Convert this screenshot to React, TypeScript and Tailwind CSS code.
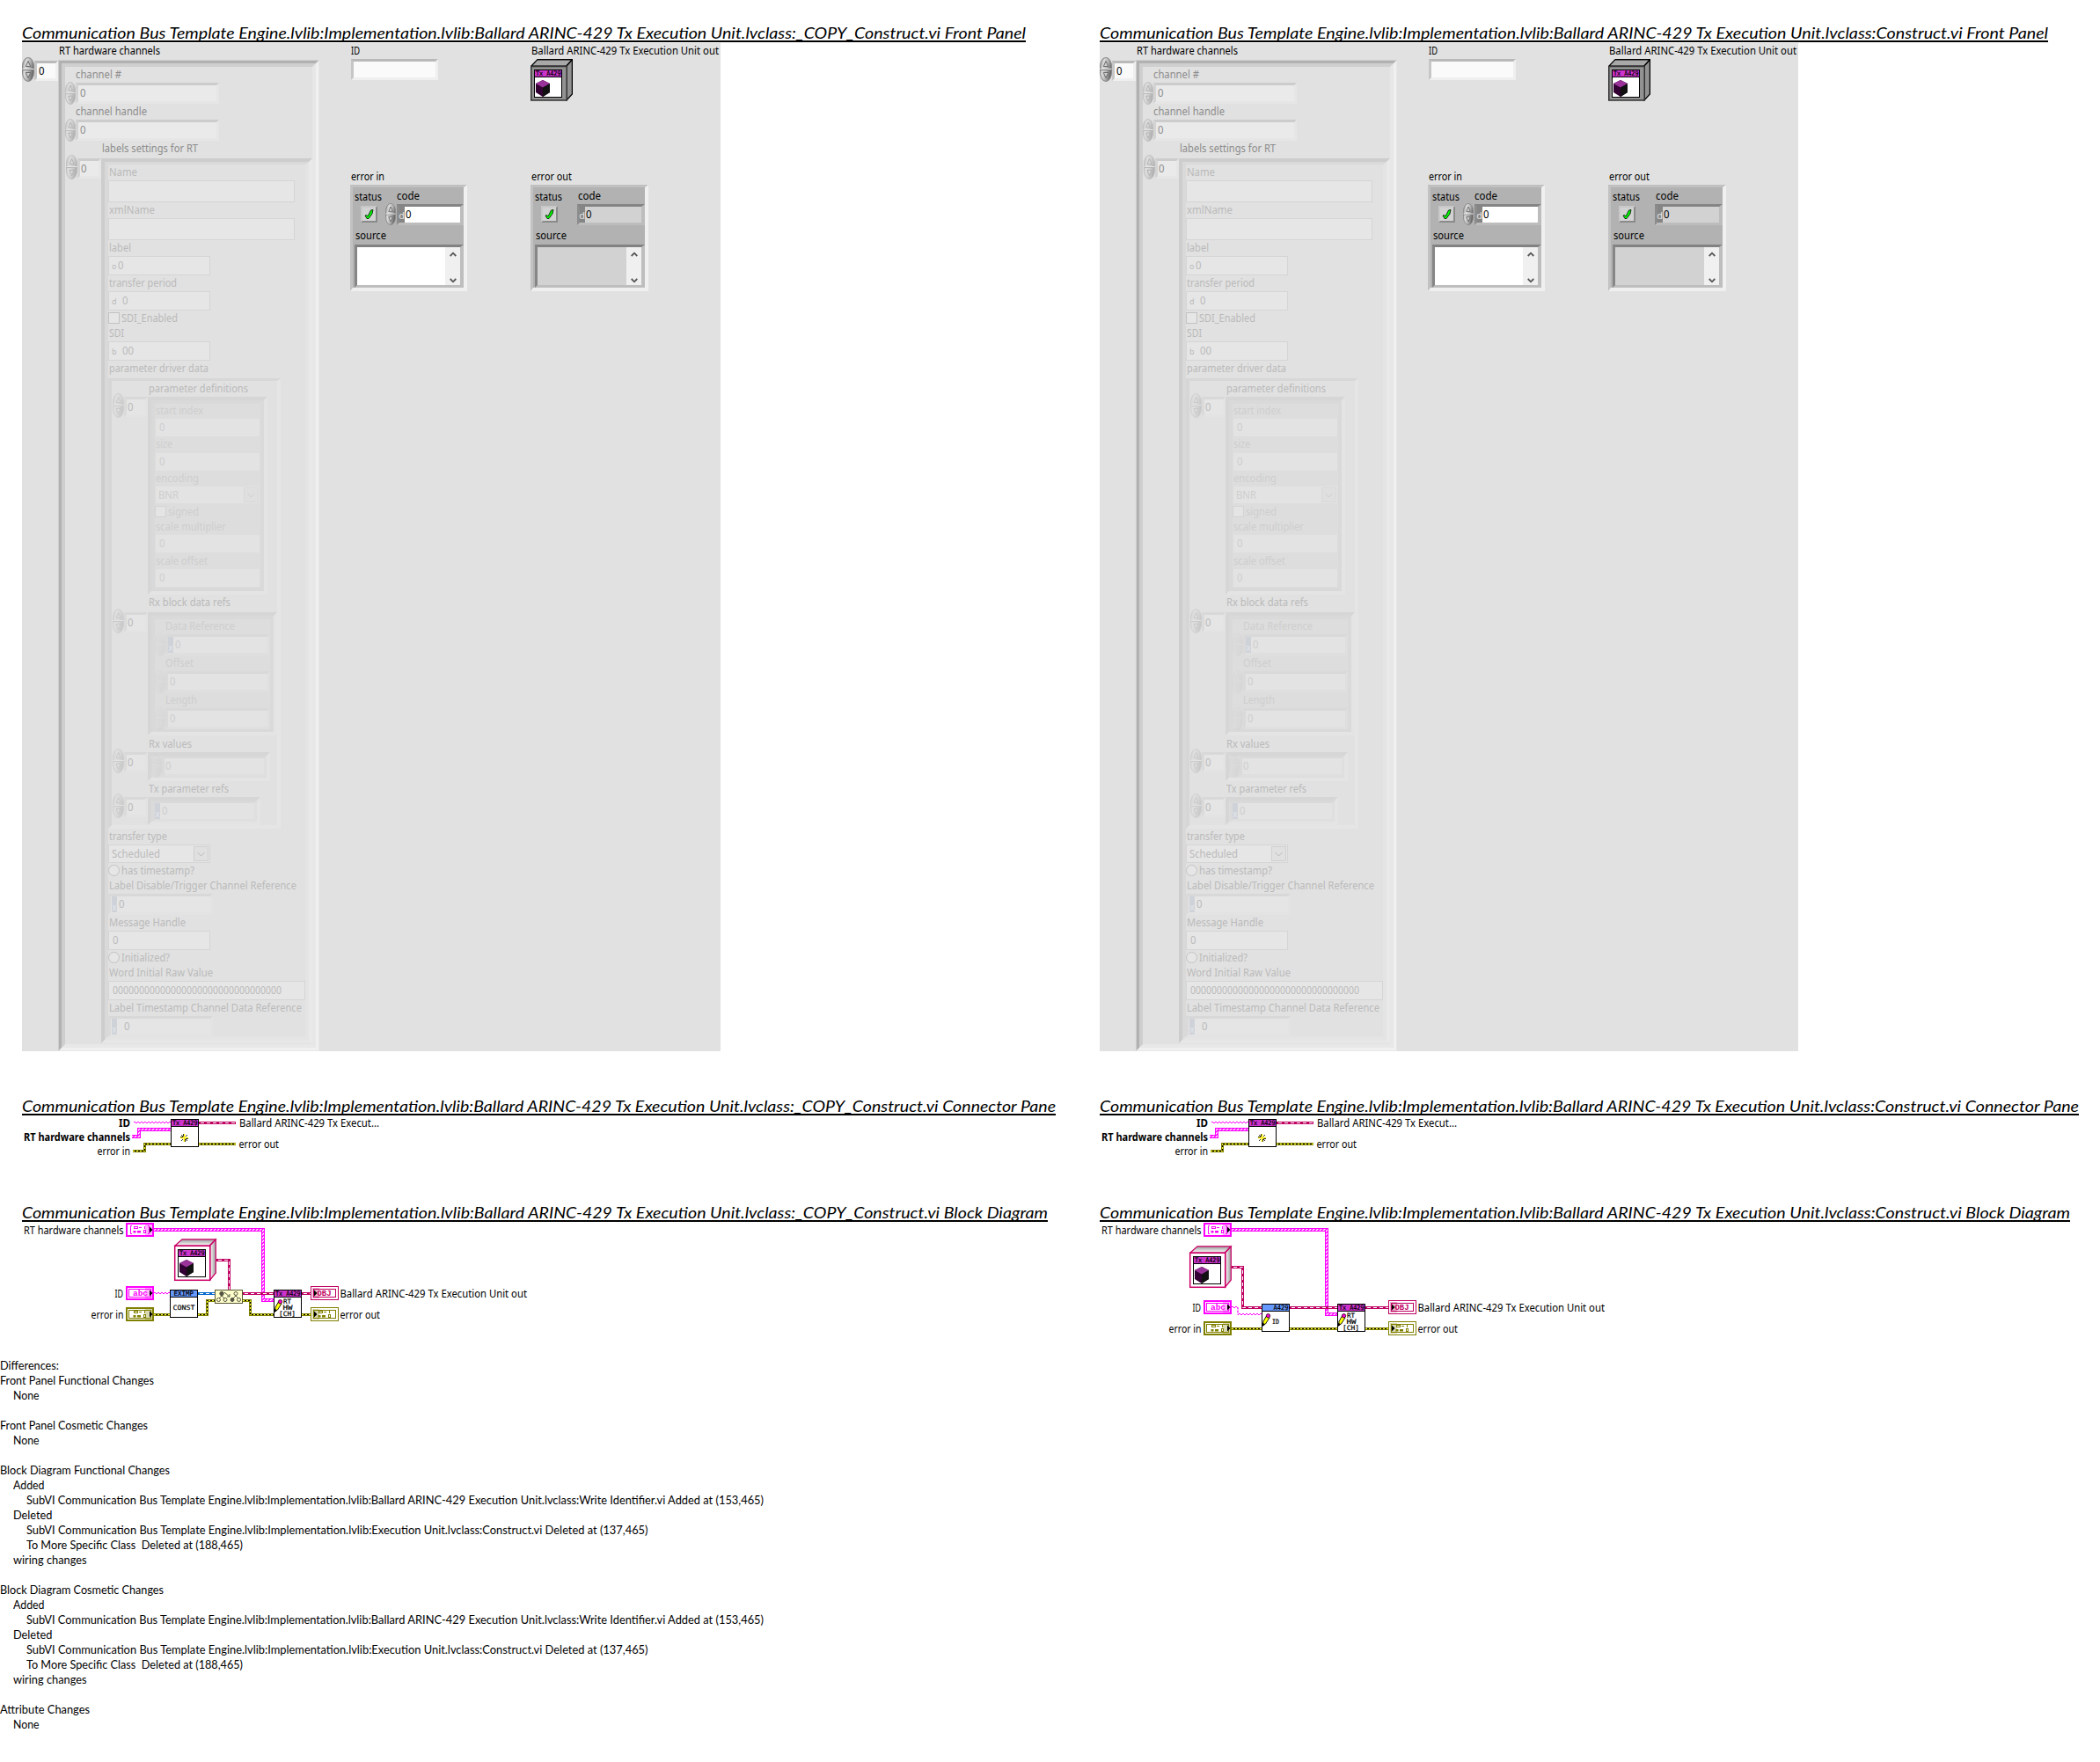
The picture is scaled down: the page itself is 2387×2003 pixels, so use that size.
import React, { useLayoutEffect, useRef, useState } from "react";

type Kids = { children?: React.ReactNode };
type Level = 0 | 1 | 2 | 3;

/* Single line of text stretched to an exact advance width. */
function Fit({ w, children, className = "" }: { w: number; children: string; className?: string }) {
  const ref = useRef<HTMLSpanElement>(null);
  const [scale, setScale] = useState(1);
  useLayoutEffect(() => {
    if (ref.current) setScale(w / ref.current.getBoundingClientRect().width);
  }, []);
  return (
    <span className={"block shrink-0 whitespace-pre " + className} style={{ width: w }}>
      <span ref={ref} className="inline-block origin-left" style={{ transform: `scaleX(${scale})` }}>
        {children}
      </span>
    </span>
  );
}

const TEXT: Record<Level, string> = {
  0: "text-black",
  1: "text-[#8c8c8c]",
  2: "text-[#bababa]",
  3: "text-[#cecece]",
};

const SUNK: Record<Level, string> = {
  0: "border-t-[#b9b9b9] border-l-[#c6c6c6] border-r-[#efefef] border-b-[#efefef] bg-[#fafafa]",
  1: "border-t-[#cccccc] border-l-[#d3d3d3] border-r-[#e6e6e6] border-b-[#e6e6e6] bg-[#eaeaea]",
  2: "border-t-[#d8d8d8] border-l-[#dadada] border-r-[#e3e3e3] border-b-[#e3e3e3] bg-[#e5e5e5]",
  3: "border-t-[#d9d9d9] border-l-[#dadada] border-r-[#dfdfdf] border-b-[#dfdfdf] bg-[#e3e3e3]",
};

const FADE: Record<Level, string> = { 0: "opacity-100", 1: "opacity-40", 2: "opacity-20", 3: "opacity-5" };

function Label({ w, level = 0, className = "", children }: { w: number; level?: Level; className?: string; children: string }) {
  return (
    <div className={"h-[18px] leading-[18px] " + TEXT[level] + " " + className}>
      <Fit w={w}>{children}</Fit>
    </div>
  );
}

function Spinner({ level, className = "h-7 w-[13px]" }: { level: Level; className?: string }) {
  return (
    <svg viewBox="0 0 13 28" preserveAspectRatio="none" className={"block shrink-0 " + FADE[level] + " " + className}>
      <defs>
        <linearGradient id="knob" x1="0" x2="1" y1="0" y2="0.35">
          <stop offset="0" stopColor="#8c8c8c" />
          <stop offset="0.35" stopColor="#dcdcdc" />
          <stop offset="0.7" stopColor="#b0b0b0" />
          <stop offset="1" stopColor="#6a6a6a" />
        </linearGradient>
      </defs>
      <rect x="0.5" y="0.5" width="12" height="27" rx="6" ry="10" fill="url(#knob)" stroke="#8a8a8a" />
      <path d="M0.5 14.5H12.5" stroke="#777" />
      <path d="M0.5 13.5H12.5" stroke="#eee" />
      <path d="M4 10.5L6.5 4.5L9 10.5Z" fill="#d0d0d0" stroke="#666" strokeWidth="0.9" />
      <path d="M4 17.5L6.5 23.5L9 17.5Z" fill="#d0d0d0" stroke="#666" strokeWidth="0.9" />
    </svg>
  );
}

/* Bevelled numeric field. */
function Num({ level, className, children }: Kids & { level: Level; className: string }) {
  return (
    <div className={"flex shrink-0 items-center border-3 leading-none " + SUNK[level] + " " + TEXT[level] + " " + className}>{children}</div>
  );
}

/* Flat system-style field. */
function Field({ className, children }: Kids & { className: string }) {
  return (
    <div className={"flex items-center border border-[#d5d5d5] bg-[#e6e6e6] leading-none text-[#bababa] " + className}>{children}</div>
  );
}

function Flat({ className = "h-5", children }: Kids & { className?: string }) {
  return <div className={"ml-px flex w-[118px] items-center bg-[#e3e3e3] leading-none text-[#cecece] " + className}>{children}</div>;
}

function Tag({ className = "", children }: { className?: string; children: string }) {
  return (
    <span className={"flex w-[6px] shrink-0 items-end justify-center self-stretch bg-[#cfd3d9] pb-px text-[10px] text-[#e4e6ea] " + className}>
      {children}
    </span>
  );
}

function Chevron({ className }: { className: string }) {
  return (
    <span className={"ml-auto flex h-[17px] w-[17px] shrink-0 items-center justify-center border " + className}>
      <svg viewBox="0 0 9 6" className="h-[6px] w-[9px]">
        <path d="M0.5 1L4.5 5L8.5 1" fill="none" stroke="currentColor" />
      </svg>
    </span>
  );
}

function IndexRow({ level, className = "", children }: Kids & { level: Level; className?: string }) {
  return (
    <div className={"flex items-start " + className}>
      <Spinner level={level} className={level === 0 ? "-mt-[3px] h-7 w-[14px]" : "-mt-1 ml-px h-7 w-[13px]"} />
      <Num level={level} className={level === 0 ? "mt-px h-[23px] w-[27px] pl-0.5" : "h-[23px] w-[27px] pl-px"}>
        <Fit w={6.5}>0</Fit>
      </Num>
      {children}
    </div>
  );
}

/* Two-step bevel that surrounds an array element. */
function Frame({ outer, inner, className, children }: Kids & { outer: string; inner: string; className: string }) {
  return (
    <div className={"flex shrink-0 border-4 " + outer + " " + className}>
      <div className={"min-w-0 flex-1 " + inner}>{children}</div>
    </div>
  );
}

const FAINT_OUTER = "border-t-[#d6d6d6] border-l-[#d6d6d6] border-r-[#e4e4e4] border-b-[#e4e4e4] bg-[#dcdcdc]";
const FAINT_INNER = "border-4 border-t-[#d9d9d9] border-l-[#d9d9d9] border-r-[#dadada] border-b-[#d9d9d9] bg-[#dddddd]";

function Stepper({ level, className = "", children }: Kids & { level: Level; className?: string }) {
  return (
    <div className={"flex h-6 items-center " + className}>
      <Spinner level={level} className="h-[26px] w-3" />
      {children}
    </div>
  );
}

function ParameterDefinitions() {
  return (
    <Frame outer={FAINT_OUTER} inner={FAINT_INNER} className="h-[225px] w-[136px]">
      <Label level={3} w={54} className="-mt-px pl-px">start index</Label>
      <Flat><Fit w={6.5} className="ml-1">0</Fit></Flat>
      <Label level={3} w={19} className="pl-px">size</Label>
      <Flat className="mt-px h-5"><Fit w={6.5} className="ml-1">0</Fit></Flat>
      <Label level={3} w={49} className="pl-px">encoding</Label>
      <Flat className="h-[19px]">
        <Fit w={23} className="ml-[3px]">BNR</Fit>
        <Chevron className="mr-px border-[#d9d9d9] bg-[#dfdfdf]" />
      </Flat>
      <div className="mt-[3px] flex h-[13px] items-center leading-none text-[#cecece]">
        <span className="mr-0.5 h-[13px] w-[13px] border border-[#d3d3d3] bg-[#e4e4e4]" />
        <Fit w={35}>signed</Fit>
      </div>
      <Label level={3} w={80} className="mt-0.5 pl-px">scale multiplier</Label>
      <Flat><Fit w={6.5} className="ml-1">0</Fit></Flat>
      <Label level={3} w={59} className="mt-px pl-px">scale offset</Label>
      <Flat><Fit w={6.5} className="ml-1">0</Fit></Flat>
    </Frame>
  );
}

function BlockDataRefs() {
  return (
    <Frame outer={FAINT_OUTER} inner={FAINT_INNER} className="h-[140px] w-[147px]">
      <Label level={3} w={79} className="-mt-px pl-3">Data Reference</Label>
      <Stepper level={3}>
        <Num level={3} className="h-6 w-[119px]"><Tag>x</Tag><Fit w={6.5} className="ml-0.5">0</Fit></Num>
      </Stepper>
      <Label level={3} w={32} className="pl-3">Offset</Label>
      <Stepper level={3}>
        <Num level={3} className="h-6 w-[119px] pl-0.5"><Fit w={6.5}>0</Fit></Num>
      </Stepper>
      <Label level={3} w={36} className="pl-3">Length</Label>
      <Stepper level={3}>
        <Num level={3} className="h-6 w-[119px] pl-0.5"><Fit w={6.5}>0</Fit></Num>
      </Stepper>
    </Frame>
  );
}

function DriverData() {
  return (
    <div className="mt-0.5 h-[512px] w-[196px] border-4 border-t-3 border-t-[#d7d7d7] border-r-[#e5e5e5] border-b-[#e5e5e5] border-l-[#d6d6d6]">
      <Label level={2} w={113} className="pl-[42px]">parameter definitions</Label>
      <IndexRow level={2}><ParameterDefinitions /></IndexRow>
      <Label level={2} w={93} className="pl-[42px]">Rx block data refs</Label>
      <IndexRow level={2} className="mt-0.5"><BlockDataRefs /></IndexRow>
      <Label level={2} w={49} className="mt-px pl-[42px]">Rx values</Label>
      <IndexRow level={2}>
        <Frame outer={FAINT_OUTER} inner="bg-[#dcdcdc]" className="h-[33px] w-[139px]">
          <Stepper level={3}>
            <Num level={3} className="h-6 w-[119px] pl-px"><Fit w={6.5}>0</Fit></Num>
          </Stepper>
        </Frame>
      </IndexRow>
      <Label level={2} w={91} className="pl-[42px]">Tx parameter refs</Label>
      <IndexRow level={2}>
        <Frame outer={FAINT_OUTER} inner="bg-[#dcdcdc]" className="h-8 w-32">
          <Num level={3} className="ml-px h-6 w-[119px]"><Tag>x</Tag><Fit w={6.5} className="ml-0.5">0</Fit></Num>
        </Frame>
      </IndexRow>
    </div>
  );
}

function Toggle({ w, round, children }: { w: number; round?: boolean; children: string }) {
  return (
    <div className="mt-0.5 flex h-[13px] items-center leading-none text-[#bababa]">
      <span className={"mr-0.5 h-[13px] w-[13px] border border-[#c2c2c2] bg-[#e6e6e6] " + (round ? "rounded-full" : "")} />
      <Fit w={w}>{children}</Fit>
    </div>
  );
}

function LabelSettings() {
  return (
    <div className="flex h-[1006px] w-[240px] shrink-0 border-4 border-t-[#cdcdcd] border-r-[#e9e9e9] border-b-[#e7e7e7] border-l-[#cdcdcd]">
      <div className="min-w-0 flex-1 border-4 border-t-3 border-t-[#dadada] border-r-[#e4e4e4] border-b-[#e4e4e4] border-l-[#d9d9d9]">
        <Label level={2} w={32} className="pl-px">Name</Label>
        <Field className="h-[25px] w-[212px]" />
        <Label level={2} w={52} className="pl-px">xmlName</Label>
        <Field className="h-[25px] w-[212px]" />
        <Label level={2} w={25} className="pl-px">label</Label>
        <Field className="h-[22px] w-[116px] gap-0.5 pl-[3px]">
          <span className="w-[5px] text-[9px]">o</span><Fit w={6.5}>0</Fit>
        </Field>
        <Label level={2} w={77} className="pl-px">transfer period</Label>
        <Field className="h-[22px] w-[116px] gap-[7px] pl-[3px]">
          <span className="w-[5px] text-[9px]">d</span><Fit w={6.5}>0</Fit>
        </Field>
        <Toggle w={64}>SDI_Enabled</Toggle>
        <Label level={2} w={17} className="mt-0.5 pl-px">SDI</Label>
        <Field className="h-[22px] w-[116px] gap-[7px] pl-[3px]">
          <span className="w-[5px] text-[9px]">b</span><Fit w={13}>00</Fit>
        </Field>
        <Label level={2} w={113} className="pl-px">parameter driver data</Label>
        <DriverData />
        <Label level={2} w={66} className="pl-px">transfer type</Label>
        <Field className="h-[21px] w-[116px] pl-[3px]">
          <Fit w={55}>Scheduled</Fit>
          <Chevron className="mr-px border-[#d0d0d0] bg-[#e0e0e0]" />
        </Field>
        <Toggle w={83} round>has timestamp?</Toggle>
        <Label level={2} w={213} className="mt-0.5 pl-px">Label Disable/Trigger Channel Reference</Label>
        <Num level={2} className="h-6 w-[119px]"><Tag className="ml-px">x</Tag><Fit w={6.5} className="ml-0.5">0</Fit></Num>
        <Label level={2} w={87} className="pl-px">Message Handle</Label>
        <Field className="h-[22px] w-[116px] pl-1"><Fit w={6.5}>0</Fit></Field>
        <Toggle w={55} round>Initialized?</Toggle>
        <Label level={2} w={118} className="mt-0.5 pl-px">Word Initial Raw Value</Label>
        <Field className="h-[22px] w-[224px] pl-1"><Fit w={192}>00000000000000000000000000000000</Fit></Field>
        <Label level={2} w={219} className="pl-px">Label Timestamp Channel Data Reference</Label>
        <Num level={2} className="h-6 w-[119px]"><Tag className="ml-px">x</Tag><Fit w={6.5} className="ml-2">0</Fit></Num>
      </div>
    </div>
  );
}

function HardwareChannels() {
  return (
    <div className="w-[338px] shrink-0">
      <Label w={115} className="pl-[42px]">RT hardware channels</Label>
      <IndexRow level={0} className="mt-px">
        <div className="flex h-[1127px] w-[297px] shrink-0 border border-t-[#cecece] border-r-[#e7e7e7] border-b-[#e7e7e7] border-l-[#cecece]">
          <div className="flex flex-1 border-3 border-t-[#b1b1b1] border-r-[#f0f0f0] border-b-[#f0f0f0] border-l-[#b1b1b1]">
            <div className="min-w-0 flex-1 border-4 border-t-[#cfcfcf] border-r-[#e7e7e7] border-b-[#e8e8e8] border-l-[#cecece]">
              <Label level={1} w={52} className="pl-3">channel #</Label>
              <Stepper level={1}><Num level={1} className="h-6 w-[163px] pl-0.5"><Fit w={6.5}>0</Fit></Num></Stepper>
              <Label level={1} w={81} className="pl-3">channel handle</Label>
              <Stepper level={1}><Num level={1} className="h-6 w-[163px] pl-0.5"><Fit w={6.5}>0</Fit></Num></Stepper>
              <Label level={1} w={109} className="pl-[42px]">labels settings for RT</Label>
              <IndexRow level={1} className="mt-0.5"><LabelSettings /></IndexRow>
            </div>
          </div>
        </div>
      </IndexRow>
    </div>
  );
}

function ErrorCluster({ input }: { input?: boolean }) {
  const fill = input ? "bg-white" : "bg-[#d2d2d2]";
  return (
    <div className={"h-[121px] border-4 border-t-3 border-l-3 border-t-[#c0c0c0] border-r-[#f0f0f0] border-b-[#efefef] border-l-[#c2c2c2] bg-[#b2b2b2] " + (input ? "w-[133px]" : "w-[134px]")}>
      <div className="flex h-[17px] pt-0.5 leading-[18px]">
        <Fit w={31} className="ml-[2px]">status</Fit>
        <Fit w={26} className={input ? "-mt-px ml-[17px]" : "-mt-px ml-[18px]"}>code</Fit>
      </div>
      <div className="flex h-[26px] items-center">
        <span className="mt-px ml-[9px] flex h-[19px] w-[19px] shrink-0 items-center justify-center border-2 border-t-[#c8c8c8] border-r-[#8b8b8b] border-b-[#8b8b8b] border-l-[#c8c8c8] bg-[#d2d2d2]">
          <svg viewBox="0 0 11 13" className="h-[13px] w-[11px] shrink-0">
            <path d="M1 8L2.5 7.5L4 9L7.5 2L10 1.5L9 6L5 11.5L3 11.5Z" fill="#00ff00" stroke="#000" strokeWidth="0.8" strokeLinejoin="round" />
          </svg>
        </span>
        {input ? <Spinner level={0} className="ml-[9px] h-[25px] w-3" /> : <span className="w-[21px] shrink-0" />}
        <div className={"mt-0.5 ml-px flex h-6 flex-1 items-center border-3 border-r-4 border-t-[#858585] border-r-[#bdbdbd] border-b-[#bdbdbd] border-l-[#8c8c8c] leading-none " + fill}>
          <span className="flex w-[6px] items-center justify-end self-stretch bg-[#858585] text-[11px] text-[#e4e4e4]">d</span>
          <Fit w={6.5} className="ml-px">0</Fit>
        </div>
      </div>
      <div className="h-[18px] pt-px leading-[22px]"><Fit w={35} className="ml-[3px]">source</Fit></div>
      <div className={"mt-1 ml-[2px] flex h-[49px] justify-end border-3 border-r-4 border-t-[#828282] border-r-[#bebebe] border-b-[#bebebe] border-l-[#868686] " + fill}>
        <div className="flex w-[17px] flex-col items-center justify-between bg-[#f0f0f0] py-[5px]">
          <svg viewBox="0 0 8 6" className="h-[6px] w-2"><path d="M0.7 5L4 1.7L7.3 5" fill="none" stroke="#555" strokeWidth="1.8" /></svg>
          <svg viewBox="0 0 8 6" className="-mb-[3px] h-[6px] w-2"><path d="M0.7 1L4 4.3L7.3 1" fill="none" stroke="#555" strokeWidth="1.8" /></svg>
        </div>
      </div>
    </div>
  );
}

function FrontPanel() {
  return (
    <div className="mt-px flex h-[1146px] w-[794px] bg-[#e1e1e1] text-[12px]">
      <HardwareChannels />
      <div className="ml-[35px] w-[133px]">
        <Label w={10} className="pl-px">ID</Label>
        <Num level={0} className="ml-px h-6 w-[99px]" />
        <Label w={38} className="mt-[101px] pl-px">error in</Label>
        <ErrorCluster input />
      </div>
      <div className="ml-[72px] w-[215px]">
        <Label w={213} className="pl-px">Ballard ARINC-429 Tx Execution Unit out</Label>
        <svg viewBox="0 0 48 48" className="block h-12 w-12">
          <defs>
            <linearGradient id="lid" x1="0" x2="0" y1="0" y2="0.2"><stop offset="0" stopColor="#3c3c3c" /><stop offset="1" stopColor="#a8a8a8" /></linearGradient>
            <linearGradient id="flank" x1="0.85" x2="1" y1="0" y2="0"><stop offset="0" stopColor="#929292" /><stop offset="1" stopColor="#3c3c3c" /></linearGradient>
          </defs>
          <path d="M1 8L8 0.7H47.3L41 8Z" fill="url(#lid)" stroke="#000" strokeWidth="1.2" />
          <path d="M41 8L47.4 1V40L41 47Z" fill="url(#flank)" stroke="#000" strokeWidth="1.2" />
          <rect x="0.75" y="8.5" width="40.5" height="38.5" fill="#929292" stroke="#333" strokeWidth="1.5" />
          <g transform="translate(4 12)"><ClassFace /></g>
        </svg>
        <Label w={46} className="mt-[77px] pl-px">error out</Label>
        <ErrorCluster />
      </div>
    </div>
  );
}

/* ---------- diagram drawing ---------- */

function T({ x, y, w, children, bold }: { x: number; y: number; w: number; children: string; bold?: boolean }) {
  return (
    <text x={x} y={y} textLength={w} lengthAdjust="spacingAndGlyphs" className={"text-[12px] " + (bold ? "font-bold" : "")}>{children}</text>
  );
}

function Tiny({ x, y, w, children }: { x: number; y: number; w: number; children: string }) {
  return (
    <text x={x} y={y} textLength={w} lengthAdjust="spacingAndGlyphs" className="font-['DejaVu_Sans_Mono'] text-[7.5px]" stroke="#000" strokeWidth="0.2">{children}</text>
  );
}

function NodeBox({ header, title, tx = 2, tw = 28.5 }: { header: string; title: string; tx?: number; tw?: number }) {
  return (
    <g>
      <rect x="0.5" y="0.5" width="31" height="31" fill="#fff" stroke="#000" />
      <rect x="1" y="1" width="30" height="7" fill={header} />
      <path d="M0 8.5H32" stroke="#000" />
      <Tiny x={tx} y={7.2} w={tw}>{title}</Tiny>
    </g>
  );
}

function ClassFace() {
  return (
    <g>
      <NodeBox header="#cc33cc" title="Tx A429" />
      <path d="M10 12L18 16V26L10 31L2 26V16Z" fill="#330033" />
      <path d="M10 12L18 16L10 20.5L2 16Z" fill="#993399" />
      <path d="M10 20.5L18 16V26L10 31Z" fill="#111" />
    </g>
  );
}

function Cube({ x, y }: { x: number; y: number }) {
  return (
    <g transform={`translate(${x} ${y})`}>
      <path d="M1 8L9 0.8H47.2L40 8Z" fill="url(#shade)" stroke="#cc0066" strokeWidth="1.2" />
      <path d="M40.7 8L47.3 1V39L40.7 47Z" fill="url(#side)" stroke="#cc0066" strokeWidth="1.2" />
      <rect x="0.7" y="8.3" width="40" height="39" fill="#fff" stroke="#cc0066" strokeWidth="1.5" />
      <g transform="translate(4 12)"><ClassFace /></g>
    </g>
  );
}

function Pencil() {
  return (
    <g>
      <path d="M2 20L5.5 14L9 16L4.5 23L1.5 25Z" fill="#ffff00" stroke="#000" strokeWidth="0.9" />
      <path d="M1 26V22L4 23Z" fill="#000" />
      <circle cx="7.5" cy="13.8" r="2.2" fill="#ff00cc" stroke="#000" strokeWidth="0.7" />
    </g>
  );
}

function HardwareNode({ x, y }: { x: number; y: number }) {
  return (
    <g transform={`translate(${x} ${y})`}>
      <NodeBox header="#cc33cc" title="Tx A429" />
      <Pencil />
      <Tiny x={11} y={16} w={9}>RT</Tiny>
      <Tiny x={10.5} y={23.2} w={11}>HW</Tiny>
      <Tiny x={6} y={30} w={19}>[CH]</Tiny>
    </g>
  );
}

type Glyph = "array" | "cluster" | "abc" | "OBJ";

function Terminal({ x, y, color, glyph, out }: { x: number; y: number; color: string; glyph: Glyph; out?: boolean }) {
  return (
    <g transform={`translate(${x} ${y})`}>
      <rect x={out ? 0.5 : 1} y={out ? 0.5 : 1} width={out ? 31 : 30} height={out ? 15 : 14} fill="#fff" stroke={color} strokeWidth={out ? 1 : 2} />
      {glyph !== "array" && <rect x="3.5" y="3.5" width="25" height="9" fill="none" stroke={color} />}
      {glyph === "array" && <path d="M7 3.5H5.5V12.5H7M25 3.5H26.5V12.5H25" fill="none" stroke={color} />}
      {(glyph === "array" || glyph === "cluster") && (
        <g fill="none" stroke={color}>
          <rect x="9.5" y="4.5" width="4" height="2" />
          <path d="M15 5.5H18M21.5 4V7" />
          <rect x="9" y="9.5" width="2" height="1.5" fill={color} />
          <rect x="13.5" y="9.5" width="3" height="1.5" fill={color} />
          <rect x="20.5" y="8.5" width="2" height="3" />
        </g>
      )}
      {(glyph === "abc" || glyph === "OBJ") && (
        <text x={out ? 7.5 : 8} y={11} textLength={glyph === "abc" ? 17 : 16} lengthAdjust="spacingAndGlyphs" fill={color} className="font-['Liberation_Mono'] text-[9px] font-bold">{glyph}</text>
      )}
      <rect x={out ? 2 : 22} y="2" width="8" height="12" fill={color} opacity="0.3" />
      <path d={out ? "M4 4.5L7.5 8L4 11.5Z" : "M27 4.5L30.5 8L27 11.5Z"} fill="#000" />
    </g>
  );
}

function ErrWire({ d }: { d: string }) {
  return (
    <g fill="none">
      <path d={d} stroke="#808000" strokeWidth="3" />
      <path d={d} stroke="#000" />
      <path d={d} stroke="#ffff33" strokeDasharray="2 2" />
    </g>
  );
}

function ObjWire({ d, color = "#bf0060" }: { d: string; color?: string }) {
  return (
    <g fill="none">
      <path d={d} stroke={color} strokeWidth="3" />
      <path d={d} stroke="#fff" strokeDasharray="4 3" strokeDashoffset="-2" />
    </g>
  );
}

function ArrWire({ d }: { d: string }) {
  return (
    <g fill="none">
      <path d={d} stroke="#ff00ff" strokeWidth="4" />
      <path d={d} stroke="url(#twist)" strokeWidth="2" />
    </g>
  );
}

function StrWire({ d }: { d: string }) {
  return (
    <g fill="none" stroke="#ff00ff" strokeDasharray="2 2">
      <path d={d} transform="translate(0 -0.5)" />
      <path d={d} transform="translate(0 0.5)" strokeDashoffset="2" />
    </g>
  );
}

function Defs() {
  return (
    <defs>
      <pattern id="twist" width="4" height="4" patternUnits="userSpaceOnUse">
        <rect width="4" height="4" fill="#ff00ff" />
        <path d="M-1 3L3 -1M1 5L5 1" stroke="#fff" strokeWidth="1.3" />
      </pattern>
      <linearGradient id="shade" x1="0" x2="0" y1="0" y2="1"><stop offset="0" stopColor="#999" /><stop offset="1" stopColor="#fff" /></linearGradient>
      <linearGradient id="side" x1="0" x2="1" y1="0" y2="0"><stop offset="0" stopColor="#fff" /><stop offset="1" stopColor="#999" /></linearGradient>
    </defs>
  );
}

function ConnectorPane() {
  return (
    <svg viewBox="25 1268 430 60" className="block h-[60px] w-[430px]">
      <Defs />
      <StrWire d="M152 1276H194" />
      <ArrWire d="M150 1292H158V1284H194" />
      <ErrWire d="M151 1308.5H164.5V1300.5H194" />
      <ObjWire d="M226 1276.5H268" />
      <ErrWire d="M226 1300.5H268" />
      <g transform="translate(194 1272)">
        <NodeBox header="#cc33cc" title="Tx A429" />
        <path d="M15.5 17V26M11 21.5H20" stroke="#ffee00" strokeWidth="1.6" />
        <path d="M14.5 17V20M11 20.5H14M17 22.5H20M16.5 23V26M12 18L14 20M19 18L17 20M12 25L14 23M19 25L17 23" stroke="#000" strokeWidth="0.8" />
      </g>
      <T x={135} y={1281} w={13} bold>ID</T>
      <T x={27} y={1297} w={121} bold>RT hardware channels</T>
      <T x={110.5} y={1313} w={37.5}>error in</T>
      <T x={272} y={1281} w={159}>Ballard ARINC-429 Tx Execut...</T>
      <T x={271.5} y={1305} w={45.5}>error out</T>
    </svg>
  );
}

const PINK = "#ff00ff";
const OLIVE = "#808000";
const CRIMSON = "#bf0060";

/* dy: vertical offset of the ID and error rows. */
function SharedParts({ dy }: { dy: number }) {
  return (
    <g>
      <T x={27} y={1403} w={113.5}>RT hardware channels</T>
      <Terminal x={143} y={1390} color={PINK} glyph="array" />
      <g transform={`translate(0 ${dy})`}>
        <T x={130.5} y={1475} w={9.5}>ID</T>
        <T x={103.5} y={1499} w={37}>error in</T>
        <T x={386.5} y={1475} w={212.5}>Ballard ARINC-429 Tx Execution Unit out</T>
        <T x={386.5} y={1499} w={45.5}>error out</T>
        <Terminal x={143} y={1462} color={PINK} glyph="abc" />
        <Terminal x={143} y={1486} color={OLIVE} glyph="cluster" />
        <Terminal x={353} y={1462} color={CRIMSON} glyph="OBJ" out />
        <Terminal x={353} y={1486} color={OLIVE} glyph="cluster" out />
      </g>
    </g>
  );
}

function CopyDiagram() {
  return (
    <svg viewBox="25 1389 600 135" className="block h-[135px] w-[600px]">
      <ArrWire d="M175 1398H299V1478H311" />
      <ObjWire d="M246 1432.5H260.5V1466" />
      <StrWire d="M175 1470H193" />
      <ObjWire d="M225 1470.5H244" color="#0066cc" />
      <ObjWire d="M276 1470.5H311" />
      <ObjWire d="M343 1470.5H353" />
      <ErrWire d="M175 1494.5H193" />
      <ErrWire d="M225 1494.5H235.5V1478.5H244" />
      <ErrWire d="M276 1478.5H284.5V1494.5H311" />
      <ErrWire d="M343 1494.5H353" />
      <Cube x={198} y={1408} />
      <g transform="translate(193 1466)">
        <NodeBox header="#6699ff" title="EXIMP" tx={4.5} tw={22.5} />
        <Tiny x={3.5} y={23} w={25}>CONST</Tiny>
      </g>
      <g transform="translate(244 1466)">
        <rect x="0.5" y="0.5" width="31" height="15" fill="#ffffcc" stroke="#555533" />
        <g stroke="#555544" fill="none">
          <circle cx="8" cy="4.5" r="2.2" fill="#555544" />
          <path d="M11 3L17 8M17 5V8H14M8 7L5 10M8 7L11 10M24 7L21 10M24 7L27 10" />
          <circle cx="24" cy="4.5" r="2" />
          <circle cx="4.5" cy="11.5" r="2" />
          <circle cx="12" cy="11.5" r="2" />
          <circle cx="20" cy="11.5" r="2" fill="#555544" />
          <circle cx="27.5" cy="11.5" r="2" />
        </g>
      </g>
      <HardwareNode x={311} y={1466} />
      <SharedParts dy={0} />
    </svg>
  );
}

function OriginalDiagram() {
  return (
    <svg viewBox="25 1389 600 135" className="block h-[135px] w-[600px]">
      <ArrWire d="M175 1398H283V1494H295" />
      <ObjWire d="M175 1440.5H187.5V1486.5H209" />
      <StrWire d="M175 1486H182V1494H209" />
      <ObjWire d="M241 1486.5H295" />
      <ObjWire d="M327 1486.5H353" />
      <ErrWire d="M175 1510.5H209" />
      <ErrWire d="M241 1510.5H295" />
      <ErrWire d="M327 1510.5H353" />
      <Cube x={127} y={1416} />
      <g transform="translate(209 1482)">
        <NodeBox header="#6699ff" title="A429" tx={13.5} tw={17} />
        <Pencil />
        <Tiny x={12} y={23} w={8}>ID</Tiny>
      </g>
      <HardwareNode x={295} y={1482} />
      <SharedParts dy={16} />
    </svg>
  );
}

function Heading({ w, children }: { w: number; children: string }) {
  return (
    <h2 className="h-[25px] w-max overflow-hidden border-b-2 border-black font-[Lato] text-[18px] leading-[28px] font-normal italic">
      <Fit w={w}>{children}</Fit>
    </h2>
  );
}

const BASE = "Communication Bus Template Engine.lvlib:Implementation.lvlib:Ballard ARINC-429 Tx Execution Unit.lvclass:";

function Version({ vi, widths, className, children }: Kids & { vi: string; widths: [number, number, number]; className: string }) {
  return (
    <section className={"h-[1544px] shrink-0 pt-[23px] " + className}>
      <Heading w={widths[0]}>{BASE + vi + " Front Panel"}</Heading>
      <FrontPanel />
      <div className="h-12" />
      <Heading w={widths[1]}>{BASE + vi + " Connector Pane"}</Heading>
      <ConnectorPane />
      <div className="h-9" />
      <Heading w={widths[2]}>{BASE + vi + " Block Diagram"}</Heading>
      {children}
    </section>
  );
}

const CHANGES: [indent: number, width: number, text: string][] = [
  [1, 35.5, "Added"],
  [2, 838, "SubVI Communication Bus Template Engine.lvlib:Implementation.lvlib:Ballard ARINC-429 Execution Unit.lvclass:Write Identifier.vi Added at (153,465)"],
  [1, 44.5, "Deleted"],
  [2, 706.5, "SubVI Communication Bus Template Engine.lvlib:Implementation.lvlib:Execution Unit.lvclass:Construct.vi Deleted at (137,465)"],
  [2, 246, "To More Specific Class  Deleted at (188,465)"],
  [1, 83.5, "wiring changes"],
  [0, 0, ""],
];

const LINES: [number, number, string][] = [
  [0, 67, "Differences:"],
  [0, 175, "Front Panel Functional Changes"],
  [1, 29.5, "None"],
  [0, 0, ""],
  [0, 168, "Front Panel Cosmetic Changes"],
  [1, 29.5, "None"],
  [0, 0, ""],
  [0, 193, "Block Diagram Functional Changes"],
  ...CHANGES,
  [0, 186, "Block Diagram Cosmetic Changes"],
  ...CHANGES,
  [0, 102, "Attribute Changes"],
  [1, 29.5, "None"],
];

const INDENT = ["pl-0", "pl-[15px]", "pl-[30px]"];

export default function App() {
  return (
    <main className="h-[2003px] w-[2387px] overflow-hidden bg-white font-['Noto_Sans',sans-serif] text-black">
      <div className="flex">
        <Version vi="_COPY_Construct.vi" widths={[1141, 1175, 1166]} className="ml-[25px] w-[1225px]">
          <CopyDiagram />
        </Version>
        <Version vi="Construct.vi" widths={[1078, 1113, 1103]} className="w-[1137px]">
          <OriginalDiagram />
        </Version>
      </div>
      <div className="font-[Lato] text-[13px] leading-[17px]">
        {LINES.map(([indent, w, text], i) => (
          <div key={i} className={"h-[17px] " + INDENT[indent]}>
            {text && <Fit w={w}>{text}</Fit>}
          </div>
        ))}
      </div>
    </main>
  );
}
